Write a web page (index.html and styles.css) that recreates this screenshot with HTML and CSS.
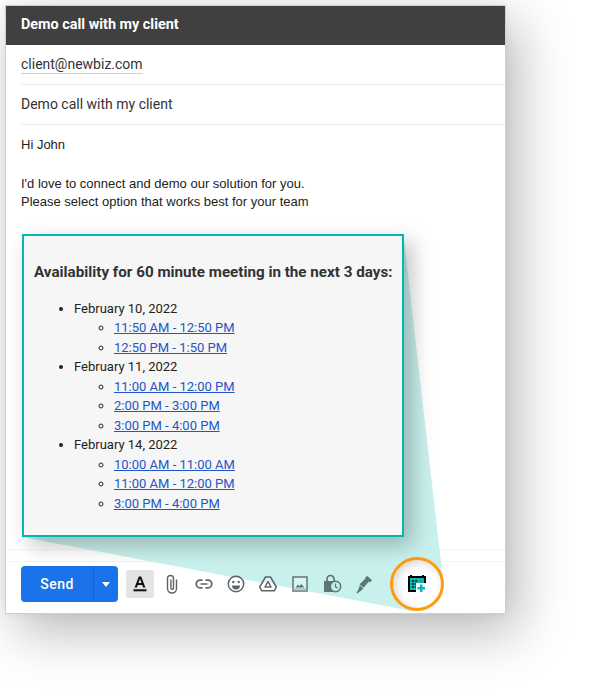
FILE: index.html
```html
<!DOCTYPE html>
<html lang="en">
<head>
    <meta charset="UTF-8">
    <meta name="viewport" content="width=device-width, initial-scale=1.0">
    <title>Demo call with my client</title>
    <link rel="stylesheet" href="styles.css">
</head>
<body>

<div class="compose">
    <svg class="cone" width="501" height="608" viewBox="0 0 501 608">
        <polygon points="17,532 399,235 438,575 407,606" fill="#c8f0ec"/>
    </svg>

    <div class="header">Demo call with my client</div>
    <div class="row"><span class="recipient">client@newbiz.com</span></div>
    <div class="row subject">Demo call with my client</div>

    <div class="message">
        <p class="greeting">Hi John</p>
        <p>I'd love to connect and demo our solution for you.<br>Please select option that works best for your team</p>
    </div>

    <div class="callout">
        <h3>Availability for 60 minute meeting in the next 3 days:</h3>
        <ul>
            <li>February 10, 2022
                <ul>
                    <li><a href="#">11:50 AM - 12:50 PM</a></li>
                    <li><a href="#">12:50 PM - 1:50 PM</a></li>
                </ul>
            </li>
            <li>February 11, 2022
                <ul>
                    <li><a href="#">11:00 AM - 12:00 PM</a></li>
                    <li><a href="#">2:00 PM - 3:00 PM</a></li>
                    <li><a href="#">3:00 PM - 4:00 PM</a></li>
                </ul>
            </li>
            <li>February 14, 2022
                <ul>
                    <li><a href="#">10:00 AM - 11:00 AM</a></li>
                    <li><a href="#">11:00 AM - 12:00 PM</a></li>
                    <li><a href="#">3:00 PM - 4:00 PM</a></li>
                </ul>
            </li>
        </ul>
    </div>

    <div class="band"></div>

    <div class="toolbar">
        <div class="send">
            <span class="send-label">Send</span>
            <span class="send-arrow"></span>
        </div>
        <div class="tool active">
            <svg width="20" height="20" viewBox="0 0 20 20"><path d="M8.800 2.500h2.400l4.200 11h-2.300l-.9-2.600H7.800l-.9 2.600H4.600zM8.500 9h3L10 4.800z" fill="#111"/><rect x="3.500" y="15.300" width="13" height="2" fill="#111"/></svg>
        </div>
        <div class="tool clip">
            <svg width="20" height="20" viewBox="0 0 20 20"><path d="M14.500 5.500v9a4.500 4.500 0 0 1-9 0v-10a3 3 0 0 1 6 0v9.500a1.300 1.300 0 0 1-2.600 0V5.500" fill="none" stroke="#5f6368" stroke-width="1.400"/></svg>
        </div>
        <div class="tool link">
            <svg width="20" height="20" viewBox="0 0 20 20"><path d="M8.500 6.200H6a3.800 3.800 0 0 0 0 7.600h2.500M11.500 6.200H14a3.800 3.800 0 0 1 0 7.600h-2.500M6.500 10h7" fill="none" stroke="#5f6368" stroke-width="1.700"/></svg>
        </div>
        <div class="tool emoji">
            <svg width="20" height="20" viewBox="0 0 20 20"><circle cx="10" cy="10" r="7.700" fill="none" stroke="#5f6368" stroke-width="1.500"/><circle cx="7.300" cy="8" r="1.200" fill="#5f6368"/><circle cx="12.700" cy="8" r="1.200" fill="#5f6368"/><path d="M6 11.500h8a4 4 0 0 1-8 0z" fill="#5f6368"/></svg>
        </div>
        <div class="tool drive">
            <svg width="20" height="20" viewBox="0 0 20 20"><path d="M7.500 3h5L18.300 13l-2 3.800H3.700L1.700 13zM10 7.500L7 13h6z" fill="#fff" fill-opacity=".45" fill-rule="evenodd" stroke="#5f6368" stroke-width="1.500" stroke-linejoin="round"/></svg>
        </div>
        <div class="tool image">
            <svg width="20" height="20" viewBox="0 0 20 20"><rect x="3" y="3" width="14" height="14" fill="#fff" fill-opacity=".3" stroke="#5c7674" stroke-width="1.500"/><path d="M5.500 13.500l2.500-3 1.500 1.700 1.700-2.300 3.300 3.600z" fill="#5c7674"/><rect x="3.700" y="14" width="12.600" height="2.300" fill="#b9c9c8"/></svg>
        </div>
        <div class="tool lock">
            <svg width="20" height="20" viewBox="0 0 20 20"><path d="M5 8V5a3.500 3.500 0 0 1 7 0v3" fill="none" stroke="#5c7674" stroke-width="1.700"/><path d="M2 7h13v11H2z" fill="#5c7674"/><circle cx="13.500" cy="12.500" r="5.200" fill="#c8f0ec" stroke="#5c7674" stroke-width="1.500"/><path d="M13.500 9.500v3.300l2.200 1.300" fill="none" stroke="#5c7674" stroke-width="1.300"/></svg>
        </div>
        <div class="tool pen">
            <svg width="20" height="20" viewBox="0 0 20 20"><path d="M13.300 2l4.700 4.200-2 2.100-1.100-.9-5.400 6.400-3.900-3.500 5.900-5.900-.7-.7zM5.800 11.200l3.500 3.200-2.700 2.700-1.500.9-1.700 1.500-1-1 1.500-1.900.7-1.500z" fill="#5c7674"/></svg>
        </div>
        <div class="ring">
            <svg width="18" height="18" viewBox="0 0 18 18">
                <path d="M0 1h2V0h2v1h10V0h2v1h2v16H0z" fill="#000"/>
                <rect x="2" y="3" width="14" height="12" fill="#10b5b0"/>
                <path d="M4 5h2v2H4zM7 5h2v2H7zM4 8h2v2H4zM7 8h2v2H7zM4 11h2v2H4zM7 11h2v2H7z" fill="#053b3a"/>
                <rect x="8" y="8" width="10" height="10" fill="#fff"/>
                <path d="M12 9.500h2.500V12H17v2.500h-2.500V17H12v-2.500H9.500V12H12z" fill="#10b5b0"/>
            </svg>
        </div>
    </div>
</div>

</body>
</html>
```

FILE: styles.css
```css
html, body {
    height: 100%;
}

body {
    margin: 0;
    min-height: 700px;
    background: #fff;
    font-family: Roboto, "Liberation Sans", sans-serif;
    color: #222;
    overflow: hidden;
}

.compose {
    position: relative;
    box-sizing: border-box;
    display: flex;
    flex-direction: column;
    width: 501px;
    height: 609px;
    margin-left: 5px;
    top: 5px;
    border: 1px solid #cfcfcf;
    background: #fff;
    box-shadow: 0 0 10px rgba(0, 0, 0, 0.06), 12px 18px 50px rgba(0, 0, 0, 0.28);
}

.cone {
    position: absolute;
    left: -1px;
    top: -1px;
}

.header {
    position: relative;
    flex-shrink: 0;
    height: 39px;
    padding-left: 15px;
    background: #404040;
    color: #fff;
    font-size: 14.4px;
    font-weight: 700;
    line-height: 37px;
}

.row {
    position: relative;
    flex-shrink: 0;
    box-sizing: border-box;
    height: 40px;
    margin-left: 15px;
    border-bottom: 1px solid #e9ebee;
    font-size: 14px;
    line-height: 38px;
    color: #333;
}

.recipient {
    display: inline-block;
    line-height: 18px;
    border-bottom: 1px solid #f5cf7c;
}

.message {
    position: relative;
    flex-shrink: 0;
    padding: 11px 15px 0;
    font-family: "Liberation Sans", Arial, sans-serif;
    font-size: 13px;
    line-height: 18px;
}

.message p {
    margin: 0 0 22px;
}

.message .greeting {
    margin-bottom: 21px;
}

.callout {
    position: relative;
    z-index: 1;
    flex-shrink: 0;
    box-sizing: border-box;
    width: 382px;
    height: 303px;
    margin: 1px 0 0 16px;
    padding: 0 10px;
    border: 2px solid #00b9b4;
    background: #f6f6f6;
    box-shadow: 8px 8px 20px rgba(0, 0, 0, 0.25);
    font-size: 13px;
    line-height: 19.5px;
}

.callout h3 {
    margin: 26px 0 16.7px;
    font-size: 15.2px;
    line-height: 20px;
    color: #333;
    white-space: nowrap;
}

.callout ul {
    margin: 0;
    padding-left: 40px;
}

.callout a {
    color: #1f55c8;
}

.band {
    flex-shrink: 0;
    box-sizing: border-box;
    height: 13px;
    margin-top: 12px;
    border-top: 1px solid #f3f3f3;
    border-bottom: 1px solid #f3f3f3;
}

.toolbar {
    position: relative;
    flex-shrink: 0;
    display: flex;
    align-items: center;
    margin-top: -5px;
    height: 54px;
    padding: 0 0 2px 15px;
}

.send {
    display: flex;
    width: 97px;
    height: 36px;
    border-radius: 4px;
    background: #1a73e8;
    color: #fff;
    font-size: 14px;
    font-weight: 500;
    letter-spacing: 0.5px;
    line-height: 36px;
}

.send-label {
    width: 72px;
    text-align: center;
    border-right: 1px solid #1764c8;
}

.send-arrow {
    width: 0;
    height: 0;
    margin: 16px 0 0 8px;
    border: 4px solid transparent;
    border-top: 5px solid #fff;
    border-bottom: 0;
}

.tool {
    display: flex;
    align-items: center;
    justify-content: center;
    width: 28px;
    height: 28px;
    margin-right: 4px;
    border-radius: 3px;
}

.tool.active {
    margin-left: 8px;
    background: #e4e4e4;
}

.ring {
    display: flex;
    align-items: center;
    justify-content: center;
    box-sizing: border-box;
    width: 54px;
    height: 54px;
    margin-left: 8px;
    border: 3px solid #ff9a0a;
    border-radius: 50%;
    background: #fff;
    box-shadow: inset 3px 3px 8px rgba(0, 0, 0, 0.15);
}
```
